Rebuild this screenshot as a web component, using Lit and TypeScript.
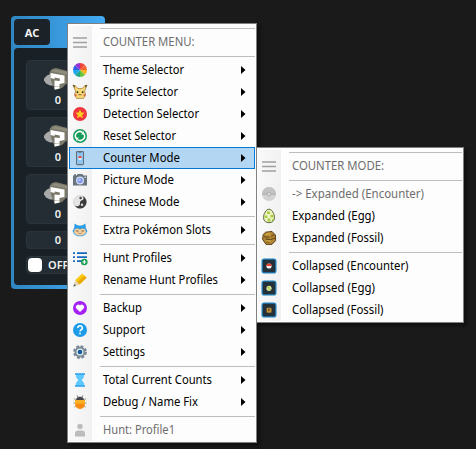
import { LitElement, html, svg, css, nothing, SVGTemplateResult } from "lit";
import { customElement, property } from "lit/decorators.js";

interface Entry {
  label?: string;
  icon?: string;
  /** rendered width of the label */
  w?: number;
  arrow?: boolean;
  active?: boolean;
  muted?: boolean;
}

const SEP: Entry = {};

const wheel = () => {
  const colors = ["#ee4137", "#f2652e", "#f8b324", "#64c63d", "#20a98e", "#1fa6ee", "#365fe0", "#9b2fd0"];
  return colors.map((c, i) => {
    const a = (i * Math.PI) / 4 - Math.PI / 2;
    const b = a + Math.PI / 4;
    const p = (t: number) => `${8 + 7 * Math.cos(t)} ${8 + 7 * Math.sin(t)}`;
    return svg`<path fill=${c} d="M8 8L${p(a)}A7 7 0 0 1 ${p(b)}Z"/>`;
  });
};

const tile = (inner: SVGTemplateResult) => svg`
  <rect x="1.1" y="1.1" width="13.8" height="13.8" rx="2.2" fill="#24303a" stroke="#1f80bd" stroke-width="1.2"/>${inner}`;

const ICONS: Record<string, () => SVGTemplateResult | SVGTemplateResult[]> = {
  bars: () => svg`<path d="M1 4H15M1 8.5H15M1 13H15" stroke="#a0a0a0" stroke-width="1.7"/>`,
  wheel,
  pika: () => svg`
    <path d="M3.6 7L1 1.2 3 1.6 6 4.5H10L13 1.6 15 1.2 12.6 7 13.6 11 11.5 14.4H4.6L2.6 11Z" fill="#f5d977" stroke="#a9803f" stroke-width=".8"/>
    <path d="M.8 .9L3 1.5 2.4 4ZM15.2 .9L13 1.5 13.6 4Z" fill="#51432e"/>
    <rect x="4.7" y="7.3" width="1.5" height="1.8" fill="#33291f"/><rect x="9.9" y="7.3" width="1.5" height="1.8" fill="#33291f"/>
    <path d="M6.3 11L8 10.5 9.8 11" fill="none" stroke="#85592d" stroke-width=".9"/>
    <rect x="2.8" y="10.2" width="1.7" height="2" fill="#df604a"/><rect x="11.6" y="10.2" width="1.7" height="2" fill="#df604a"/>`,
  star: () => svg`<circle cx="8" cy="8" r="7" fill="#f0343e"/>
    <path d="M8 3.4L9.4 6.4 12.6 6.8 10.2 9 10.9 12.2 8 10.6 5.1 12.2 5.8 9 3.4 6.8 6.6 6.4Z" fill="#ffcf1e"/>`,
  reset: () => svg`<circle cx="8" cy="8" r="7" fill="#169b59"/>
    <g fill="none" stroke="#fff" stroke-width="1.5"><path d="M4.2 10.4A4.4 4.4 0 0 1 10.6 4.5"/><path d="M11.8 5.6A4.4 4.4 0 0 1 5.4 11.5"/></g>
    <path d="M9.2 6.4L12.4 6.2 11.4 3Z M6.8 9.6L3.6 9.8 4.6 13Z" fill="#fff"/>`,
  phone: () => svg`<rect x="4.5" y="1.6" width="7" height="13" rx=".9" fill="#8cc5f2" stroke="#62727e" stroke-width="1.1"/>
    <path d="M7 2.2H9" stroke="#40505e" stroke-width=".8"/><circle cx="8" cy="8" r="1.9" fill="#e7f2f7"/><path d="M6.1 8A1.9 1.9 0 0 1 9.9 8Z" fill="#e04038"/>`,
  camera: () => svg`<path d="M1 3.4H4.6L5.6 2H10.4L11.4 3.4H15V13.6H1Z" fill="#68757f"/>
    <rect x="2" y="2.4" width="2" height="1.2" fill="#46545f"/><rect x="12.4" y="4.6" width="1.6" height="1.2" fill="#dce6ee"/>
    <circle cx="8" cy="8.5" r="4" fill="#d7e0f2"/><circle cx="8" cy="8.5" r="2.8" fill="#7f96f1"/><circle cx="7.5" cy="8" r="1.3" fill="#b5caff"/>`,
  yin: () => svg`<circle cx="8" cy="8" r="6.5" fill="#e4e4e4" stroke="#c3c3c3" stroke-width=".5"/>
    <path d="M10 1.8A6.5 6.5 0 1 1 2.6 11.6C5.4 13 8.2 11.8 8 9.4 7.8 7 9 6.8 10.6 6.1 12.2 5.2 11.6 2.8 10 1.8Z" fill="#3b3b3b"/>
    <circle cx="8.6" cy="4" r="1.2" fill="#444"/><circle cx="10" cy="10.8" r="1.2" fill="#ddd"/>`,
  snor: () => svg`<path d="M2.2 6L2.6 1.4 5.8 3.4H10.2L13.4 1.4 13.8 6 15.4 9 13.8 12.2 10.5 14.2H5.5L2.2 12.2 .6 9Z" fill="#2d9be6"/>
    <path d="M2.6 7.4Q5.4 5.4 8 7.4 10.6 5.4 13.4 7.4L14 10.4Q12.4 13.5 8 13.5T2 10.4Z" fill="#f4ce9d"/>
    <path d="M4 9H6.5M9.5 9H12" stroke="#73573e" stroke-width=".9"/><path d="M6 11Q8 12.4 10 11" fill="#fff" stroke="#94613e" stroke-width=".6"/>`,
  list: () => svg`<path d="M5 3.2H15M5 7.2H15M5 11.2H10" stroke="#1769bd" stroke-width="1.7"/><path d="M1 3.2H3M1 7.2H3M1 11.2H3" stroke="#1769bd" stroke-width="1.7"/>
    <circle cx="12.3" cy="12" r="3.3" fill="#149b50"/><path d="M10.4 12H14.2M12.3 10.1V13.9" stroke="#fff" stroke-width="1.1"/>`,
  pencil: () => svg`<path d="M3.2 8.2L10.2 1.5 14.6 5.7 7.5 12.6Z" fill="#fbc90b"/><path d="M5 10.2L12.6 3.7 14.6 5.7 7.5 12.6Z" fill="#e9a909"/>
    <path d="M3.2 8.2L7.5 12.6 1.4 14.6Z" fill="#e5d3b2"/><path d="M1.4 14.6L2.2 11.9 4 13.8Z" fill="#4c5961"/>`,
  heart: () => svg`<circle cx="8" cy="8" r="7" fill="#a520f5"/><path d="M8 12L4.3 8.5A2.2 2.2 0 0 1 8 5.6 2.2 2.2 0 0 1 11.7 8.5Z" fill="#fff"/>`,
  help: () => svg`<circle cx="8" cy="8" r="7" fill="#1b9be8"/><path d="M5.9 6.2A2.2 2.2 0 1 1 8.9 8Q8 8.5 8 9.6" fill="none" stroke="#fff" stroke-width="1.5"/><rect x="7.2" y="10.7" width="1.6" height="1.6" fill="#fff"/>`,
  gear: () => svg`<circle cx="8" cy="8" r="5.8" fill="none" stroke="#7b8995" stroke-width="2.2" stroke-dasharray="2.8 1.75"/>
    <circle cx="8" cy="8" r="4.5" fill="#e4ebf0" stroke="#7b8995" stroke-width="1.9"/><circle cx="8" cy="8" r="2.3" fill="#15599f"/>`,
  glass: () => svg`<path d="M3.6 2H12.4Q12.2 6 9.7 8 12.2 10 12.4 14H3.6Q3.8 10 6.3 8 3.8 6 3.6 2Z" fill="#5fc9ff"/>
    <path d="M3 2H13M3 14H13" stroke="#329fe9" stroke-width="1.4"/>`,
  bug: () => svg`<path d="M1.8 4.4L4 6.2M14.2 4.4L12 6.2M1.4 9H4M14.6 9H12M2.4 13.2L4.4 11.6M13.6 13.2L11.6 11.6" stroke="#8a7a62" stroke-width=".8"/>
    <path d="M3 6H13Q13.6 14.8 8 14.8T3 6Z" fill="#fbb024"/><path d="M3.2 9.8H12.8Q12.3 14.8 8 14.8T3.2 9.8Z" fill="#f78a12"/>
    <path d="M4 6Q4.4 2.8 8 2.8T12 6Z" fill="#44464a"/><path d="M6 3L5.2 1.4M10 3L10.8 1.4" stroke="#44464a" stroke-width=".8"/>`,
  user: () => svg`<circle cx="8" cy="4.4" r="2.7" fill="#bcbcbc"/><path d="M3 14.6V11.5Q3 8.6 6 8.6H10Q13 8.6 13 11.5V14.6Z" fill="#bcbcbc"/>`,
  ball: () => svg`<circle cx="8" cy="8" r="7" fill="#d2d2d2"/><path d="M1 8A7 7 0 0 1 15 8Z" fill="#c2c2c2"/><path d="M1 8.2H15" stroke="#acacac"/><circle cx="8" cy="8.2" r="1.9" fill="#d9d9d9" stroke="#acacac" stroke-width=".9"/>`,
  egg: () => svg`<path d="M8 1.2C11 1.2 13.5 6 13.5 9.6 13.5 13 11 14.7 8 14.7S2.5 13 2.5 9.6C2.5 6 5 1.2 8 1.2Z" fill="#f0f3c3" stroke="#5d6a3b" stroke-width="1"/>
    <path d="M6 3.4H9V6H6ZM3.4 7.5H6.4V10H3.4ZM9.5 6.8H12.6V9.6H9.5ZM6.6 10.6H9.5V13.4H6.6ZM11 11H12.6V13H11Z" fill="#a4cf46"/>`,
  fossil: () => svg`<path d="M4.6 2.2L11 1.4 14.4 5 14.6 10.6 11 14.4 5 14.4 1.6 9.4 2.2 4.5Z" fill="#b08432" stroke="#5d431b"/>
    <path d="M3 6.6Q7 8.6 13.4 4.6M4.6 9Q9 11 14 8M8 12.4Q6 11 5 12" fill="none" stroke="#60451c" stroke-width="1"/><path d="M5 4.6L9 3.4M5 11H10M8 6H10" stroke="#ddb44c" stroke-width="1.1"/>`,
  tball: () => tile(svg`<circle cx="8" cy="8" r="2.6" fill="#f3f3f3"/><path d="M5.4 8A2.6 2.6 0 0 1 10.6 8Z" fill="#e8402e"/>`),
  tegg: () => tile(svg`<circle cx="8" cy="8.3" r="2.6" fill="#dce69b"/><path d="M6.6 7H8.3V8.6H6.6ZM8.4 9H9.8V10.2H8.4Z" fill="#8fb83c"/>`),
  tfossil: () => tile(svg`<rect x="5.6" y="5.8" width="4.9" height="4.9" rx="1" fill="#c08f38"/><path d="M7 9L9 7M7 7.2H8" stroke="#5d431b" stroke-width=".9"/>`),
};

const MAIN: Entry[] = [
  SEP,
  { label: "COUNTER MENU:", icon: "bars", w: 91.5, muted: true },
  SEP,
  { label: "Theme Selector", icon: "wheel", w: 81, arrow: true },
  { label: "Sprite Selector", icon: "pika", w: 75, arrow: true },
  { label: "Detection Selector", icon: "star", w: 96, arrow: true },
  { label: "Reset Selector", icon: "reset", w: 73, arrow: true },
  { label: "Counter Mode", icon: "phone", w: 77, arrow: true, active: true },
  { label: "Picture Mode", icon: "camera", w: 71, arrow: true },
  { label: "Chinese Mode", icon: "yin", w: 76.5, arrow: true },
  SEP,
  { label: "Extra Pokémon Slots", icon: "snor", w: 108, arrow: true },
  SEP,
  { label: "Hunt Profiles", icon: "list", w: 69, arrow: true },
  { label: "Rename Hunt Profiles", icon: "pencil", w: 115, arrow: true },
  SEP,
  { label: "Backup", icon: "heart", w: 39, arrow: true },
  { label: "Support", icon: "help", w: 42, arrow: true },
  { label: "Settings", icon: "gear", w: 42, arrow: true },
  SEP,
  { label: "Total Current Counts", icon: "glass", w: 109, arrow: true },
  { label: "Debug / Name Fix", icon: "bug", w: 95, arrow: true },
  SEP,
  { label: "Hunt: Profile1", icon: "user", w: 72, muted: true },
];

const SUB: Entry[] = [
  SEP,
  { label: "COUNTER MODE:", icon: "bars", w: 92, muted: true },
  SEP,
  { label: "-> Expanded (Encounter)", icon: "ball", w: 132, muted: true },
  { label: "Expanded (Egg)", icon: "egg", w: 83 },
  { label: "Expanded (Fossil)", icon: "fossil", w: 91.5 },
  SEP,
  { label: "Collapsed (Encounter)", icon: "tball", w: 116.5 },
  { label: "Collapsed (Egg)", icon: "tegg", w: 83 },
  { label: "Collapsed (Fossil)", icon: "tfossil", w: 91.5 },
];

@customElement("context-menu")
export class ContextMenu extends LitElement {
  @property({ attribute: false }) entries: Entry[] = [];

  static styles = css`
    :host {
      display: block;
      box-sizing: border-box;
      border: 1px solid #808080;
      padding: 1px;
      background: linear-gradient(90deg, #f9f9f9, #f1f1f1) 1px 2px / 23px calc(100% - 3px) no-repeat, #fdfdfd;
      box-shadow: 3px 3px 3px rgba(0, 0, 0, 0.4);
      font-family: "Noto Sans", "Open Sans", sans-serif;
    }
    .sep {
      height: 6px;
      box-sizing: border-box;
      padding: 3px 0 0 31px;
    }
    .line { height: 1px; background: #bdbdbd; }
    .row {
      height: 22px;
      box-sizing: border-box;
      border: 1px solid transparent;
      display: flex;
      align-items: center;
      color: #000;
    }
    .active { background: #b3d7f3; border-color: #0078d7; }
    .muted { color: #6d6d6d; }
    .icon { width: 16px; height: 16px; margin: 0 14px 0 2px; flex: none; }
    .label { height: 20px; flex: 1; overflow: visible; }
    .label text { font-size: 12.3px; fill: currentColor; }
    .arrow { width: 5px; height: 8px; margin-right: 8px; flex: none; }
  `;

  render() {
    return this.entries.map((e) =>
      e.label
        ? html`<div class="row ${e.active ? "active" : ""} ${e.muted ? "muted" : ""}">
            <svg class="icon" viewBox="0 0 16 16">${ICONS[e.icon!]()}</svg>
            <svg class="label" width="10"><text x="1" y="14.4" textLength=${e.w!} lengthAdjust="spacingAndGlyphs">${e.label}</text></svg>
            ${e.arrow ? html`<svg class="arrow" viewBox="0 0 5 8"><path d="M0 0L4.5 4L0 8Z"/></svg>` : nothing}
          </div>`
        : html`<div class="sep"><div class="line"></div></div>`
    );
  }
}

@customElement("app-root")
export class AppRoot extends LitElement {
  static styles = css`
    :host {
      display: block;
      position: relative;
      box-sizing: border-box;
      width: 476px;
      height: 449px;
      padding: 16px 0 0 11px;
      overflow: hidden;
      background: #1a1a1a;
      font-family: "Noto Sans", sans-serif;
    }
    .card {
      width: 94px;
      height: 273px;
      box-sizing: border-box;
      padding: 3px;
      border-radius: 4px;
      background: linear-gradient(90deg, #2f87c2, #42aaf4);
    }
    .tab {
      width: 36px;
      height: 26px;
      border-radius: 4px;
      background: #1b2329;
      color: #f4f4f4;
      font: bold 11px/27px "Noto Sans", sans-serif;
      text-align: center;
    }
    .body {
      height: 237px;
      box-sizing: border-box;
      margin-top: 3px;
      padding: 12px 0 0 12px;
      display: flex;
      flex-direction: column;
      gap: 7px;
      border-radius: 4px;
      background: #192127;
      color: #f2f2f2;
    }
    .box {
      width: 64px;
      box-sizing: border-box;
      border: 1px solid #2a353b;
      border-radius: 4px;
      background: #232d33;
      font: 600 11px/16px "Noto Sans", sans-serif;
      text-align: center;
    }
    .slot { height: 50px; padding-top: 7px; }
    .slot svg { display: block; width: 30px; height: 23px; margin: 0 0 1px 16px; }
    .total { height: 18px; }
    .toggle {
      height: 18px;
      display: flex;
      align-items: center;
      gap: 6px;
      padding-left: 1px;
    }
    .knob { width: 14px; height: 14px; border-radius: 4px; background: #fff; flex: none; }
    context-menu { position: absolute; }
    .main { left: 67px; top: 23px; width: 190px; height: 420px; }
    .sub { left: 256px; top: 147px; width: 208px; height: 176px; }
    .main, .sub { padding-top: 1px; }
  `;

  private renderSlot() {
    return html`<div class="box slot">
      <svg viewBox="0 0 30 23">
        <path d="M1 10.5L4 7.5 8 5.5 12 17.5H7L3 15.5 1 12.5Z" fill="#a9a9a9"/>
        <path d="M6.5 4L9 1 13 0 28 4V13L22 17 19 20 12 22 8 13Z" fill="#7a796a"/>
        <path d="M8.5 3.2L12 1.2 27 4.4 23 6.4Z" fill="#8f8e7e"/>
        <path d="M7.5 5L21.5 7.6V15L16.5 16V18H11.5V12.6L16.8 13V10.5L11.6 9.4V11L7.5 10Z" fill="#fff"/>
        <path d="M11.5 18.6L16.5 18.2V20.4L11.5 21.4Z" fill="#fff"/>
      </svg>
      0
    </div>`;
  }

  render() {
    return html`
      <div class="card">
        <div class="tab">AC</div>
        <div class="body">
          ${[0, 1, 2].map(() => this.renderSlot())}
          <div class="box total">0</div>
          <div class="box toggle"><span class="knob"></span>OFF</div>
        </div>
      </div>
      <context-menu class="main" .entries=${MAIN}></context-menu>
      <context-menu class="sub" .entries=${SUB}></context-menu>
    `;
  }
}
